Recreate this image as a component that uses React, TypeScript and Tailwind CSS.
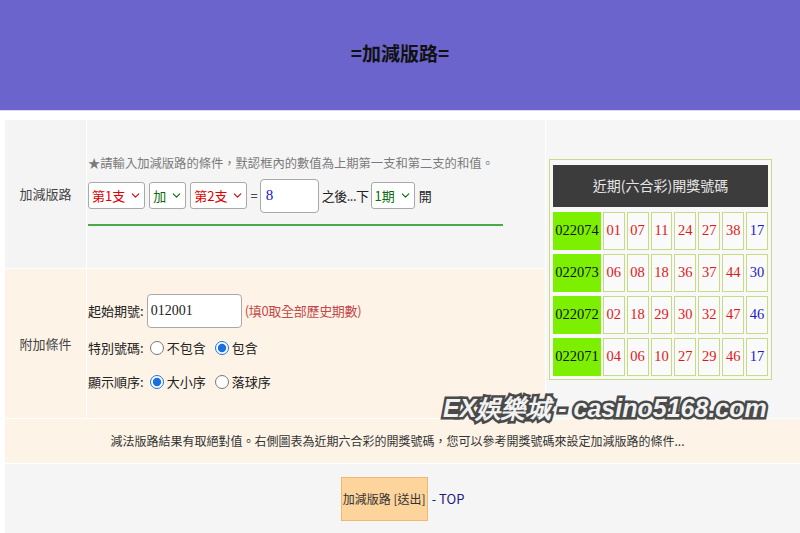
import { ChevronDown } from "lucide-react";

const draws = [
    { no: "022074", balls: ["01", "07", "11", "24", "27", "38"], special: "17" },
    { no: "022073", balls: ["06", "08", "18", "36", "37", "44"], special: "30" },
    { no: "022072", balls: ["02", "18", "29", "30", "32", "47"], special: "46" },
    { no: "022071", balls: ["04", "06", "10", "27", "29", "46"], special: "17" },
];

const FakeSelect = ({ label, tone }: { label: string; tone: "red" | "green" }) => {
    const color = tone === "red" ? "text-[#e00000]" : "text-[#0a6a0a]";
    return (
        <span
            className={`inline-flex h-[27px] items-center gap-[4px] rounded-[3px] border border-[#a9a9a9] bg-white pl-[3px] pr-[2px] text-[13px] ${color}`}
        >
            {label}
            <ChevronDown size={13} strokeWidth={2} />
        </span>
    );
};

const Radio = ({ name, checked, label }: { name: string; checked?: boolean; label: string }) => (
    <label className="flex items-center gap-[3px]">
        <input
            type="radio"
            name={name}
            defaultChecked={checked}
            className="m-0 h-[14px] w-[14px] accent-[#1a6fe0]"
        />
        <span>{label}</span>
    </label>
);

export default function App() {
    return (
        <div className="relative min-h-[533px] bg-white font-['Noto_Sans_CJK_TC','Noto_Sans',sans-serif] text-[#222]">
            {/* title bar */}
            <header className="flex h-[111px] items-center justify-center border-b border-[#dcdaf2] bg-[#6a64cc] pb-[3px]">
                <h1 className="text-[19px] font-bold text-[#111]">=加減版路=</h1>
            </header>

            <div className="mt-[9px] pl-[5px]">
                <div className="grid grid-cols-[81px_458px_1fr] grid-rows-[148px_149px_44px_70px] gap-px bg-white">
                    {/* row 1 */}
                    <div className="flex items-center justify-center bg-[#f4f4f4] text-[13px] text-[#444]">
                        加減版路
                    </div>
                    <div className="flex flex-col justify-center bg-[#f5f5f5] pl-px">
                        <div className="mb-[9px] flex flex-col">
                            <p className="h-[18px] text-[12.3px] leading-[18px] text-[#7a7a7a]">
                                ★請輸入加減版路的條件，默認框內的數值為上期第一支和第二支的和值。
                            </p>
                            <div className="mt-[7px] flex h-[34px] items-center text-[13px]">
                                <FakeSelect label="第1支" tone="red" />
                                <span className="ml-[4px]">
                                    <FakeSelect label="加" tone="green" />
                                </span>
                                <span className="ml-[4px]">
                                    <FakeSelect label="第2支" tone="red" />
                                </span>
                                <span className="ml-[3px] mr-[2px]">=</span>
                                <input
                                    defaultValue="8"
                                    className="h-[34px] w-[59px] rounded-[4px] border border-[#a9a9a9] bg-white px-[5px] font-['Liberation_Serif',serif] text-[15px] text-[#1515cc] outline-none"
                                />
                                <span className="ml-[3px] mr-[2px] tracking-[-0.5px]">之後...下</span>
                                <FakeSelect label="1期" tone="green" />
                                <span className="ml-[4px]">開</span>
                            </div>
                            <div className="mt-[11px] h-[2px] w-[415px] bg-[#4ca84c]" />
                        </div>
                    </div>

                    {/* lottery table */}
                    <div className="row-span-2 flex items-center bg-[#f6f6f6] pl-[3px]">
                        <div className="w-[223px] border border-[#c6dc84] bg-[#f8f8f8] px-[3px] pb-[3px] pt-[5px]">
                            <div className="flex h-[42px] items-center justify-center bg-[#3c3c3c] text-[14px] text-[#e6e6e6]">
                                近期(六合彩)開獎號碼
                            </div>
                            <div className="mt-[5px] flex flex-col gap-[4px] font-['Liberation_Serif',serif] text-[14.5px]">
                                {draws.map((d) => (
                                    <div key={d.no} className="flex h-[38px] gap-[2px]">
                                        <div className="flex w-[48px] items-center justify-center bg-[#7cf000] text-[#111]">
                                            {d.no}
                                        </div>
                                        {d.balls.map((b, i) => (
                                            <div
                                                key={i}
                                                className="flex w-[22px] items-center justify-center border border-[#c6dc84] bg-[#fafafa] text-[#e01818]"
                                            >
                                                {b}
                                            </div>
                                        ))}
                                        <div className="flex w-[22px] items-center justify-center border border-[#c6dc84] bg-[#fafafa] text-[#1c1cc8]">
                                            {d.special}
                                        </div>
                                    </div>
                                ))}
                            </div>
                        </div>
                    </div>

                    {/* row 2 */}
                    <div className="flex items-center justify-center bg-[#fdf3e7] text-[13px] text-[#444]">
                        附加條件
                    </div>
                    <div className="flex flex-col justify-center gap-[8px] bg-[#fdf3e7] pl-px text-[13px]">
                        <div className="flex h-[34px] items-center">
                            <span>起始期號:</span>
                            <input
                                defaultValue="012001"
                                className="ml-[3px] h-[34px] w-[95px] rounded-[4px] border border-[#a9a9a9] bg-white px-[3px] font-['Liberation_Serif',serif] text-[14px] text-[#222] outline-none"
                            />
                            <span className="ml-[3px] tracking-[-0.3px] text-[#c44a4a]">(填0取全部歷史期數)</span>
                        </div>
                        <div className="flex h-[24px] items-center gap-[9px]">
                            <span className="mr-[-3px]">特別號碼:</span>
                            <Radio name="special" label="不包含" />
                            <Radio name="special" label="包含" checked />
                        </div>
                        <div className="mt-[2px] flex h-[24px] items-center gap-[9px]">
                            <span className="mr-[-3px]">顯示順序:</span>
                            <Radio name="order" label="大小序" checked />
                            <Radio name="order" label="落球序" />
                        </div>
                    </div>

                    {/* row 3 */}
                    <div className="col-span-3 flex items-center justify-center bg-[#fdf3e7] pr-[10px] text-[12px] text-[#333]">
                        減法版路結果有取絕對值。右側圖表為近期六合彩的開獎號碼，您可以參考開獎號碼來設定加減版路的條件...
                    </div>

                    {/* row 4 */}
                    <div className="col-span-3 flex items-center justify-center bg-[#f5f5f5]">
                        <button className="h-[44px] w-[87px] whitespace-nowrap border border-[#f2b86e] bg-[#fdd49c] text-[12px] text-[#333]">
                            加減版路 [送出]
                        </button>
                        <span className="ml-[4px] text-[13px] text-[#1a1a80]">- TOP</span>
                    </div>
                </div>
            </div>

            {/* watermark */}
            <div className="absolute left-[443px] top-[396px] font-['Liberation_Sans',sans-serif] text-[25px] font-bold italic leading-none text-[#f2f2f2] [-webkit-text-stroke:5px_#4a4a4a] [paint-order:stroke_fill]">
                EX娛樂城 - casino5168.com
            </div>
        </div>
    );
}
